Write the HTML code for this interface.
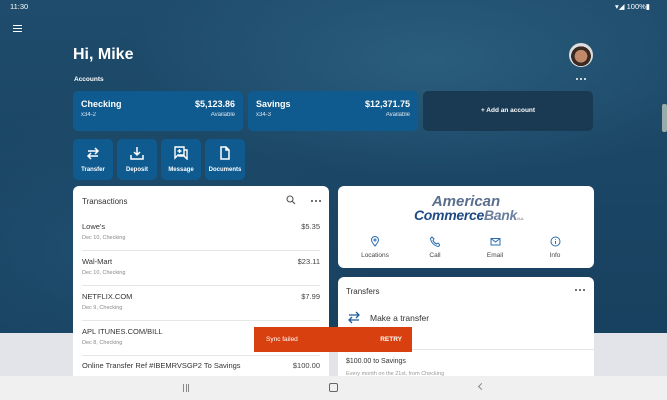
<!DOCTYPE html>
<html><head><meta charset="utf-8"><style>
*{margin:0;padding:0;box-sizing:border-box}
body{width:667px;height:400px;overflow:hidden;position:relative;font-family:"Liberation Sans",sans-serif;background:#1d4766}
.bg{position:absolute;left:0;top:0;width:667px;height:334px;background:radial-gradient(ellipse 300px 120px at 430px 60px,#2a5d7c,transparent),radial-gradient(ellipse 250px 150px at 120px 250px,#1f4e6e,transparent),linear-gradient(180deg,#1f4c6c,#18405f)}
.grey{position:absolute;left:0;top:333px;width:667px;height:43px;background:#e2e4ea}
.nav{position:absolute;left:0;top:376px;width:667px;height:24px;background:#f0f0f0;z-index:5}
.abs{position:absolute}
.w{color:#fff}
.dots{position:absolute;width:10px;height:2px}
.dots i{position:absolute;top:0;width:2px;height:2px;border-radius:50%;background:currentColor}
.dots i:nth-child(1){left:0}.dots i:nth-child(2){left:4px}.dots i:nth-child(3){left:8px}
.acct{position:absolute;top:91px;height:40px;width:170px;background:#0f5a8e;border-radius:5px;color:#fff}
.acct .n{position:absolute;left:8px;top:8px;font-size:9px;font-weight:bold}
.acct .a{position:absolute;right:8px;top:8px;font-size:9px;font-weight:bold}
.acct .s{position:absolute;left:8px;top:21px;font-size:6px;opacity:.85}
.acct .v{position:absolute;right:8px;top:21px;font-size:6px;opacity:.85}
.btn{position:absolute;top:139px;width:40px;height:41px;background:#0f5a8e;border-radius:5px;color:#fff;text-align:center}
.btn svg{position:absolute;left:13px;top:7px}
.btn span{position:absolute;left:0;right:0;top:28px;font-size:6px;font-weight:bold}
.card{position:absolute;background:#fff;border-radius:6px}
.tr{position:absolute;left:9px;right:9px;height:35px;border-bottom:1px solid #e6e6e6}
.tr .t{position:absolute;left:0;top:6px;font-size:7.5px;color:#333}
.tr .d{position:absolute;left:0;top:19px;font-size:5.5px;color:#888}
.tr .m{position:absolute;right:0;top:6px;font-size:7.5px;color:#444}
.ic{position:absolute;text-align:center;font-size:6.5px;color:#444;width:40px;line-height:10px}
</style></head><body>
<div class="bg"></div>
<div class="grey"></div>
<div class="abs w" style="left:10px;top:2px;font-size:7.5px">11:30</div>
<div class="abs w" style="left:615px;top:2px;font-size:7.5px">▾◢ 100%▮</div>
<div class="abs" style="left:13px;top:25px;width:9px;height:7px;border-top:1.3px solid #fff;border-bottom:1.3px solid #fff"></div>
<div class="abs" style="left:13px;top:28px;width:9px;height:1.3px;background:#fff"></div>
<div class="abs w" style="left:73px;top:46px;font-size:16px;font-weight:bold">Hi, Mike</div>
<div class="abs w" style="left:74px;top:76px;font-size:6.5px;font-weight:bold">Accounts</div>
<div class="abs" style="left:569px;top:43px;width:24px;height:24px;border-radius:50%;background:radial-gradient(circle at 50% 55%,#c08a6a 0 35%,#3a2a22 36% 55%,#ddd 56%)"></div>
<div class="dots" style="left:576px;top:78px;color:#fff"><i></i><i></i><i></i></div>
<div class="abs" style="left:662px;top:104px;width:5px;height:28px;background:#9aa;border-radius:2px"></div>
<div class="acct" style="left:73px"><div class="n">Checking</div><div class="a">$5,123.86</div><div class="s">x34-2</div><div class="v">Available</div></div>
<div class="acct" style="left:248px"><div class="n">Savings</div><div class="a">$12,371.75</div><div class="s">x34-3</div><div class="v">Available</div></div>
<div class="acct" style="left:423px;background:#1a3a53"><div class="abs" style="left:0;right:0;top:16px;text-align:center;font-size:6.5px;font-weight:bold">+ Add an account</div></div>
<div class="btn" style="left:73px"><svg width="14" height="14" viewBox="0 0 14 14" fill="none" stroke="#fff" stroke-width="1.5"><path d="M2 5h10M9 2l3 3-3 3M12 10H2M5 7l-3 3 3 3"/></svg><span>Transfer</span></div>
<div class="btn" style="left:117px"><svg width="14" height="14" viewBox="0 0 14 14" fill="none" stroke="#fff" stroke-width="1.5"><path d="M7 1v8M4 6l3 3 3-3M1 9v4h12V9"/></svg><span>Deposit</span></div>
<div class="btn" style="left:161px"><svg width="14" height="14" viewBox="0 0 14 14" fill="none" stroke="#fff" stroke-width="1.4"><path d="M1 1h9v8H4l-3 3zM10 4h3v9l-3-3H5v-1M5.5 3v4M3.5 5h4"/></svg><span>Message</span></div>
<div class="btn" style="left:205px"><svg width="14" height="14" viewBox="0 0 14 14" fill="none" stroke="#fff" stroke-width="1.5"><path d="M3 1h5l3 3v9H3zM8 1v3h3"/></svg><span>Documents</span></div>

<div class="card" style="left:73px;top:186px;width:256px;height:200px">
<div class="abs" style="left:9px;top:11px;font-size:8px;color:#333">Transactions</div>
<svg class="abs" style="left:213px;top:9px" width="10" height="10" viewBox="0 0 10 10" fill="none" stroke="#555" stroke-width="1.1"><circle cx="4" cy="4" r="3"/><path d="M6.3 6.3L9 9"/></svg>
<div class="dots" style="left:238px;top:14px;color:#444"><i></i><i></i><i></i></div>
<div class="tr" style="top:30px"><div class="t">Lowe's</div><div class="d">Dec 10, Checking</div><div class="m">$5.35</div></div>
<div class="tr" style="top:65px"><div class="t">Wal-Mart</div><div class="d">Dec 10, Checking</div><div class="m">$23.11</div></div>
<div class="tr" style="top:100px"><div class="t">NETFLIX.COM</div><div class="d">Dec 9, Checking</div><div class="m">$7.99</div></div>
<div class="tr" style="top:135px"><div class="t">APL ITUNES.COM/BILL</div><div class="d">Dec 8, Checking</div></div>
<div class="tr" style="top:169px;border:none"><div class="t">Online Transfer Ref #IBEMRVSGP2 To Savings</div><div class="m">$100.00</div></div>
</div>

<div class="card" style="left:338px;top:186px;width:256px;height:82px">
<div class="abs" style="left:80px;top:8px;width:96px;text-align:center;font-size:15px;font-style:italic;font-weight:bold;color:#5a6f8e;line-height:15px">American</div>
<div class="abs" style="left:76px;top:22px;font-size:14px;font-style:italic;font-weight:bold;color:#1f4a86;line-height:15px;letter-spacing:-0.3px">Commerce<span style="color:#6a7f9e">Bank</span><span style="font-size:4px;color:#999">N.A.</span></div>
<div class="ic" style="left:17px;top:50px"><svg width="10" height="11" viewBox="0 0 10 11" fill="none" stroke="#2a6db0" stroke-width="1"><path d="M5 10C2 6.5 1.5 5 1.5 4a3.5 3.5 0 017 0c0 1-.5 2.5-3.5 6z"/><circle cx="5" cy="4" r="1"/></svg><br>Locations</div>
<div class="ic" style="left:77px;top:50px"><svg width="10" height="11" viewBox="0 0 10 11" fill="none" stroke="#2a6db0" stroke-width="1"><path d="M2 1l2 2-1 1.5c.8 1.6 2 2.8 3.5 3.5L8 7l2 2-1.5 1.5C4.5 10 1 6.5.5 2.5z"/></svg><br>Call</div>
<div class="ic" style="left:137px;top:50px"><svg width="11" height="11" viewBox="0 0 11 11" fill="none" stroke="#2a6db0" stroke-width="1"><rect x="1" y="2.5" width="9" height="6.5"/><path d="M1 2.5l4.5 3.5 4.5-3.5"/></svg><br>Email</div>
<div class="ic" style="left:197px;top:50px"><svg width="11" height="11" viewBox="0 0 11 11" fill="none" stroke="#2a6db0" stroke-width="1"><circle cx="5.5" cy="5.5" r="4.5"/><path d="M5.5 5v3M5.5 3v.8"/></svg><br>Info</div>
</div>

<div class="card" style="left:338px;top:277px;width:256px;height:110px">
<div class="abs" style="left:8px;top:10px;font-size:8px;color:#333">Transfers</div>
<div class="dots" style="left:237px;top:12px;color:#444"><i></i><i></i><i></i></div>
<svg class="abs" style="left:9px;top:33px" width="14" height="14" viewBox="0 0 14 14" fill="none" stroke="#1f5e9a" stroke-width="1.3"><path d="M2 5h10M9 2l3 3-3 3M12 10H2M5 7l-3 3 3 3"/></svg>
<div class="abs" style="left:32px;top:36px;font-size:8.5px;color:#333">Make a transfer</div>
<div class="abs" style="left:0;right:0;top:72px;border-top:1px solid #e6e6e6"></div>
<div class="abs" style="left:8px;top:81px;font-size:7px;color:#333">$100.00 to Savings</div>
<div class="abs" style="left:8px;top:94px;font-size:5.5px;color:#999">Every month on the 21st, from Checking</div>
</div>

<div class="abs" style="left:254px;top:327px;width:158px;height:25px;background:#d9400f;z-index:4">
<div class="abs w" style="left:12px;top:9px;font-size:6.5px">Sync failed</div>
<div class="abs w" style="right:10px;top:9px;font-size:6.5px;font-weight:bold">RETRY</div>
</div>
<div class="nav">
<div class="abs" style="left:183px;top:8px;width:6px;height:8px;border-left:1px solid #888;border-right:1px solid #888"></div>
<div class="abs" style="left:185.5px;top:8px;width:1px;height:8px;background:#888"></div>
<div class="abs" style="left:329px;top:7px;width:9px;height:9px;border:1.2px solid #666;border-radius:2px"></div>
<div class="abs" style="left:479px;top:8px;width:5px;height:5px;border-left:1px solid #888;border-bottom:1px solid #888;transform:rotate(45deg)"></div>
</div>
</body></html>
